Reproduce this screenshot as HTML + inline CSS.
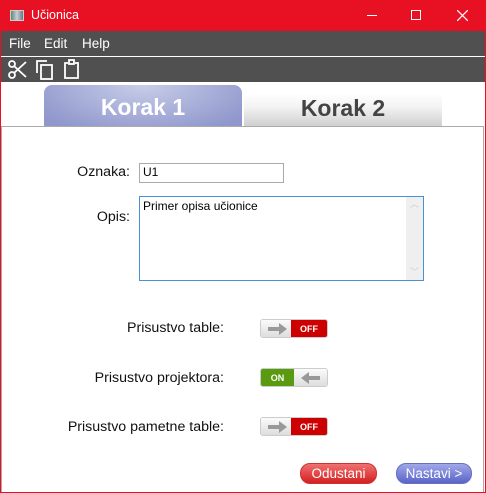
<!DOCTYPE html>
<html><head><meta charset="utf-8"><style>
*{margin:0;padding:0;box-sizing:border-box}
body{width:486px;height:493px;position:relative;overflow:hidden;background:#fff;font-family:"Segoe UI","Liberation Sans","DejaVu Sans",sans-serif;}
.abs{position:absolute}
#win{position:absolute;left:0;top:0;width:486px;height:493px;border:1px solid #e81123;}
#title{left:0;top:0;width:486px;height:31px;background:#e81123;color:#fff;font-size:12.5px}
#menu{left:1px;top:31px;width:484px;height:25px;background:#505050;color:#fff;font-size:13.5px}
#tool{left:1px;top:57px;width:484px;height:25px;background:#505050}
.lbl{font-size:14.2px;color:#111;text-align:right;width:200px}
.tog{width:68px;height:19px;border-radius:3px;overflow:hidden;display:flex;border:1px solid #ccc;font-family:"Liberation Sans",sans-serif;font-weight:bold;font-size:9px;color:#fff}
.gray{flex:1;background:linear-gradient(#fbfbfb,#ddd);position:relative}
.red{width:36px;background:#c00;display:flex;align-items:center;justify-content:center}
.grn{width:33px;background:#5a9a10;display:flex;align-items:center;justify-content:center}
.btn{height:21px;border-radius:10px;color:#fff;font-size:13.5px;text-align:center;line-height:19px}
</style></head><body>
<div id="win"></div>
<div id="title" class="abs">
 <div class="abs" style="left:10px;top:10px;width:14px;height:11px;background:linear-gradient(90deg,#5a8a80,#c8d0d0 50%,#678);border:1px solid #ccc"></div>
 <div class="abs" style="left:31px;top:8px">Učionica</div>
 <div class="abs" style="left:367px;top:15px;width:10px;height:1px;background:#fff"></div>
 <div class="abs" style="left:411px;top:10px;width:10px;height:10px;border:1px solid #fff"></div>
 <svg class="abs" style="left:457px;top:10px" width="11" height="11"><path d="M0 0L11 11M11 0L0 11" stroke="#fff" stroke-width="1.2"/></svg>
</div>
<div id="menu" class="abs">
 <span class="abs" style="left:8px;top:5px">File</span>
 <span class="abs" style="left:43px;top:5px">Edit</span>
 <span class="abs" style="left:81px;top:5px">Help</span>
</div>
<div class="abs" style="left:1px;top:56px;width:484px;height:1px;background:#fff"></div>
<div id="tool" class="abs">
 <svg class="abs" style="left:7px;top:3px" width="20" height="19" fill="none" stroke="#fff" stroke-width="1.8"><circle cx="4" cy="4" r="3"/><circle cx="4" cy="15" r="3"/><path d="M6 6L18 17M6 13L18 2"/></svg>
 <svg class="abs" style="left:35px;top:3px" width="18" height="20" fill="none" stroke="#fff" stroke-width="1.8"><path d="M1 13V1H11"/><rect x="5" y="5" width="11" height="14"/></svg>
 <svg class="abs" style="left:62px;top:2px" width="18" height="20" fill="none" stroke="#fff" stroke-width="1.8"><path d="M5 4H2V19H15V4H12"/><rect x="6" y="1" width="5" height="4"/></svg>
</div>
<div class="abs" style="left:44px;top:85px;width:198px;height:41px;border-radius:8px 8px 0 0;background:radial-gradient(ellipse at 50% 0%,#c8cde8,#8f97cc 90%);color:#fff;font-weight:bold;font-size:23px;text-align:center;line-height:44px;font-family:'Liberation Sans',sans-serif">Korak 1</div>
<div class="abs" style="left:244px;top:93px;width:198px;height:33px;background:linear-gradient(#fff,#f4f4f4 40%,#d0d0d0);color:#444;font-weight:bold;font-size:23px;text-align:center;line-height:30px;font-family:'Liberation Sans',sans-serif">Korak 2</div>
<div class="abs" style="left:1px;top:126px;width:483px;height:366px;border-left:1px solid #aaa;border-top:1px solid #aaa;border-right:1px solid #aaa"></div>
<div class="abs lbl" style="left:-70px;top:164px">Oznaka:</div>
<div class="abs" style="left:139px;top:163px;width:145px;height:20px;border:1px solid #aaa;font-size:12px;padding:1px 3px">U1</div>
<div class="abs lbl" style="left:-70px;top:209px">Opis:</div>
<div class="abs" style="left:139px;top:196px;width:285px;height:85px;border:1px solid #4a90d9;font-size:12px;padding:2px 3px">Primer opisa učionice
 <div class="abs" style="right:0;top:0;width:17px;height:83px;background:#efefef;color:#ccc;font-size:9px;text-align:center">︿<div style="position:absolute;bottom:2px;width:17px">﹀</div></div>
</div>
<div class="abs lbl" style="left:24px;top:320px">Prisustvo table:</div>
<div class="abs tog" style="left:260px;top:319px"><div class="gray"><svg class="abs" style="left:7px;top:3px" width="20" height="12"><path d="M0 4H11V0L19 6L11 12V8H0Z" fill="#999"/></svg></div><div class="red">OFF</div></div>
<div class="abs lbl" style="left:24px;top:370px">Prisustvo projektora:</div>
<div class="abs tog" style="left:260px;top:368px"><div class="grn">ON</div><div class="gray"><svg class="abs" style="left:7px;top:3px" width="20" height="12"><path d="M19 4H8V0L0 6L8 12V8H19Z" fill="#999"/></svg></div></div>
<div class="abs lbl" style="left:24px;top:419px">Prisustvo pametne table:</div>
<div class="abs tog" style="left:260px;top:417px"><div class="gray"><svg class="abs" style="left:7px;top:3px" width="20" height="12"><path d="M0 4H11V0L19 6L11 12V8H0Z" fill="#999"/></svg></div><div class="red">OFF</div></div>
<div class="abs btn" style="left:300px;top:463px;width:77px;background:linear-gradient(#f07070,#d42020);border:1px solid #c33">Odustani</div>
<div class="abs btn" style="left:396px;top:463px;width:76px;background:linear-gradient(#a0a8e8,#5a64c8);border:1px solid #6670c0">Nastavi &gt;</div>
</body></html>
